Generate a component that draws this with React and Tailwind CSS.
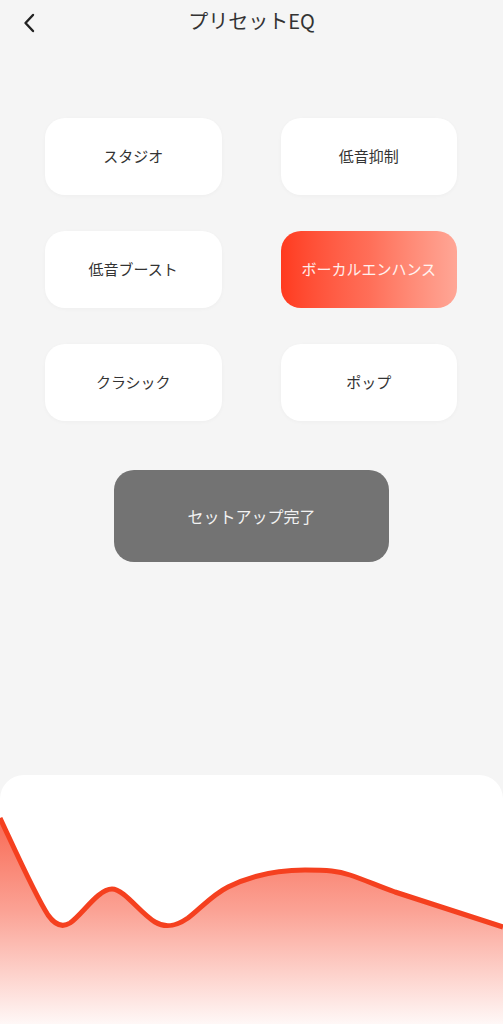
import React, { useState } from 'react';

const presets = ['スタジオ', '低音抑制', '低音ブースト', 'ボーカルエンハンス', 'クラシック', 'ポップ'];

const EqChart = () => (
    <svg width="503" height="249" viewBox="0 0 503 249" className="block">
        <defs>
            <linearGradient id="eqFill" x1="0" y1="0" x2="0" y2="1">
                <stop offset="0" stopColor="#f7452a" stopOpacity="0.8" />
                <stop offset="0.45" stopColor="#f7452a" stopOpacity="0.5" />
                <stop offset="1" stopColor="#f7452a" stopOpacity="0.04" />
            </linearGradient>
        </defs>
        <path
            d="M0,43 C15,75 35,120 48,140 C55,150 62,153 70,148 C82,140 98,114 112,114 C124,114 140,138 155,147 C165,153 175,152 188,143 C200,134 212,120 228,112 C250,101 275,95 305,95 C328,95 338,96 350,100 C365,105 378,111 395,117 L503,152 L503,249 L0,249 Z"
            fill="url(#eqFill)"
        />
        <path
            d="M0,43 C15,75 35,120 48,140 C55,150 62,153 70,148 C82,140 98,114 112,114 C124,114 140,138 155,147 C165,153 175,152 188,143 C200,134 212,120 228,112 C250,101 275,95 305,95 C328,95 338,96 350,100 C365,105 378,111 395,117 L503,152"
            fill="none"
            stroke="#f5401f"
            strokeWidth="5"
            strokeLinejoin="round"
        />
    </svg>
);

const App = () => {
    const [selected, setSelected] = useState('ボーカルエンハンス');

    return (
        <div className="h-screen bg-[#f5f5f5] flex flex-col overflow-hidden" style={{ fontFamily: '"Noto Sans CJK JP", "Noto Sans", sans-serif' }}>
            {/* Header */}
            <div className="relative h-[42px] flex items-center justify-center">
                <button className="absolute left-[18px] top-[8px] p-1">
                    <svg width="14" height="22" viewBox="0 0 14 22" fill="none">
                        <path d="M11 3 L3.5 11 L11 19" stroke="#222" strokeWidth="2.4" strokeLinecap="round" strokeLinejoin="round" />
                    </svg>
                </button>
                <h1 className="text-[20px] font-normal text-[#333] leading-none">プリセットEQ</h1>
            </div>

            {/* Preset grid */}
            <div className="grid grid-cols-2 gap-x-[59px] gap-y-[36px] pl-[45px] pr-[46px] mt-[76px]">
                {presets.map((name) => {
                    const active = name === selected;
                    return (
                        <button
                            key={name}
                            onClick={() => setSelected(name)}
                            className={`h-[77px] rounded-[20px] flex items-center justify-center text-[15px] ${active
                                ? 'bg-gradient-to-r from-[#ff3a1e] via-[#ff6e58] to-[#ffa696] text-white/90'
                                : 'bg-white text-[#333] shadow-[0_1px_4px_rgba(0,0,0,0.03)]'
                                }`}
                        >
                            {name}
                        </button>
                    );
                })}
            </div>

            {/* Done button */}
            <div className="flex justify-center mt-[49px]">
                <button className="w-[275px] h-[92px] rounded-[20px] bg-[#737373] text-[#f2f2f2] text-[16px]">
                    セットアップ完了
                </button>
            </div>

            {/* EQ curve card */}
            <div className="mt-auto h-[249px] bg-white rounded-t-[24px] overflow-hidden">
                <EqChart />
            </div>
        </div>
    );
};

export default App;
